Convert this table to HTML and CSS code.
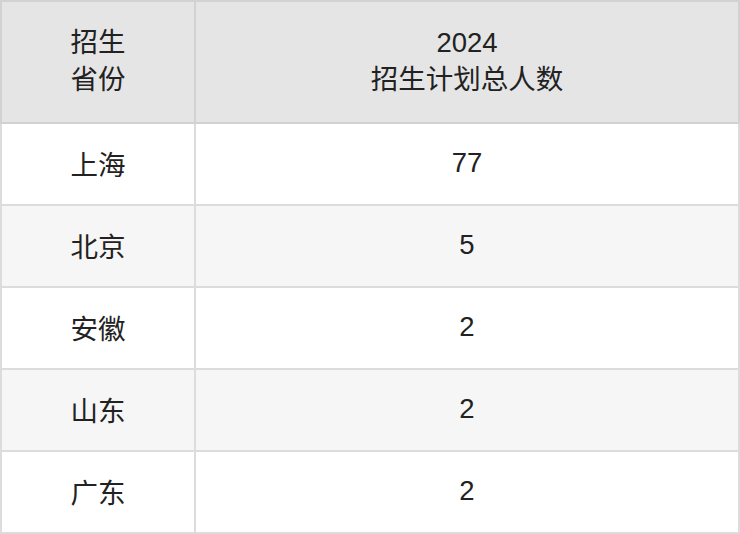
FILE: index.html
```html
<!DOCTYPE html>
<html lang="zh">
<head>
<meta charset="utf-8">
<link rel="stylesheet" href="styles.css">
</head>
<body>
<table class="plan">
  <thead>
    <tr>
      <th class="c1">招生<br>省份</th>
      <th class="c2">2024<br>招生计划总人数</th>
    </tr>
  </thead>
  <tbody>
    <tr><td>上海</td><td>77</td></tr>
    <tr class="alt"><td>北京</td><td>5</td></tr>
    <tr><td>安徽</td><td>2</td></tr>
    <tr class="alt"><td>山东</td><td>2</td></tr>
    <tr><td>广东</td><td>2</td></tr>
  </tbody>
</table>
</body>
</html>
```
FILE: styles.css
```css
html, body {
  margin: 0;
  padding: 0;
  background: #fff;
}
.plan {
  border-collapse: collapse;
  width: 740px;
  table-layout: fixed;
  font-family: "Liberation Sans", "Noto Sans CJK SC", sans-serif;
  font-size: 27.5px;
  color: #222;
}
.plan th, .plan td {
  border: 2px solid #dcdcdc;
  text-align: center;
  padding: 0 0 3px;
  font-weight: normal;
}
.plan th {
  background: #e5e5e5;
  border-color: #d2d2d2;
  height: 117px;
  line-height: 37px;
}
.plan .c1 { width: 192px; }
.plan td {
  height: 77px;
}
.plan tr.alt td {
  background: #f6f6f6;
}
```
